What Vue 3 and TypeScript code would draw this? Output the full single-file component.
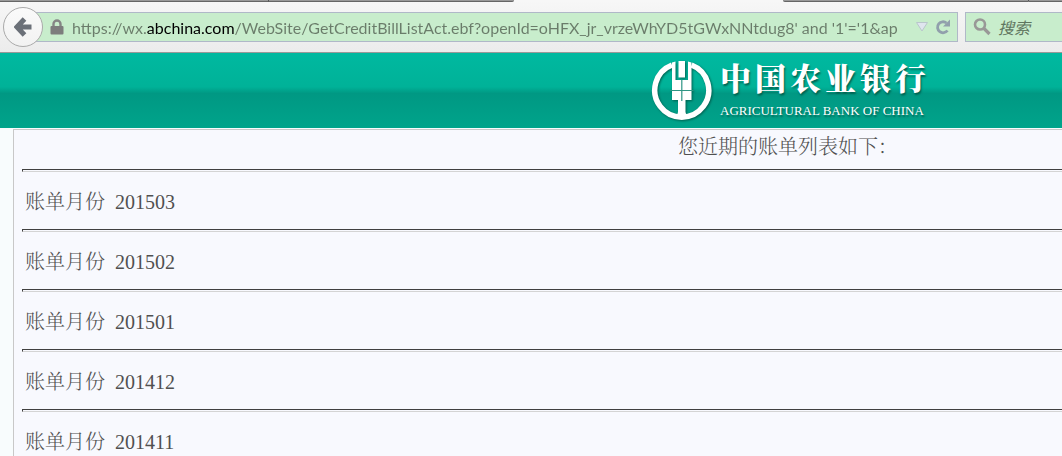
<script setup lang="ts">
import { ref } from 'vue'

const address = ref("https://wx.abchina.com/WebSite/GetCreditBillListAct.ebf?openId=oHFX_jr_vrzeWhYD5tGWxNNtdug8' and '1'='1&ap")
const query = ref('')
const bankName: string[] = ['中', '国', '农', '业', '银', '行']
const months: string[] = ['201503', '201502', '201501', '201412', '201411']
</script>

<template>
  <div class="window">
    <header class="toolbar">
      <div class="tabs">
        <span class="tab first"></span>
        <span class="tab second"></span>
        <span class="tab active"></span>
        <span class="tab third"></span>
        <span class="tab last"></span>
      </div>
      <div class="bar">
        <button class="back" type="button" aria-label="后退">
          <svg width="18" height="20" viewBox="0 0 18 20">
            <path d="M10.500 2 L3 10 L10.500 18 M3 10 H17.500" fill="none" stroke="#6b7078" stroke-width="5" />
          </svg>
        </button>
        <div class="field location">
          <svg class="lock" width="14" height="16" viewBox="0 0 14 16">
            <path d="M3.500 8 V5 a3.500 3.500 0 0 1 7 0 V8" fill="none" stroke="#858585" stroke-width="2.400" />
            <rect x="0.500" y="7" width="13" height="8.500" rx="1" fill="#7d7d7d" />
          </svg>
          <input v-model="address" class="address" type="text" aria-label="地址" spellcheck="false" />
          <button class="icon drop" type="button" aria-label="历史记录">
            <svg width="14" height="12" viewBox="0 0 14 12">
              <path d="M1.500 1.500 H12.500 L7 10 Z" fill="#dfe5ee" stroke="#b9c6cc" />
            </svg>
          </button>
          <button class="icon" type="button" aria-label="刷新">
            <svg width="16" height="16" viewBox="0 0 16 16">
              <path d="M12.500 11.500 A5.500 5.500 0 1 1 11.500 4" fill="none" stroke="#919fac" stroke-width="2.800" />
              <path d="M15 0.500 V7.500 H8 Z" fill="#919fac" />
            </svg>
          </button>
        </div>
        <div class="field search">
          <svg width="18" height="18" viewBox="0 0 18 18">
            <circle cx="7" cy="6.500" r="5" fill="none" stroke="#999897" stroke-width="2.600" />
            <path d="M10.500 10 L16.500 16" stroke="#999897" stroke-width="3.200" />
          </svg>
          <input v-model="query" class="query" type="text" placeholder="搜索" aria-label="搜索" />
        </div>
      </div>
    </header>

    <main class="page">
      <div class="banner">
        <svg class="emblem" width="62" height="62" viewBox="0 0 62 62">
          <path d="M22 5 A27 27 0 1 0 41.500 5" fill="none" stroke="#fff" stroke-width="5.500" />
          <path d="M22 2.500 L25.500 1.500 V20 H38 V1.500 L41.500 2.500 V40 H35.500 V52 Q35.500 55 38.500 57 H25 Q28 55 28 52 V40 H22 Z" fill="#fff" />
          <path d="M28.500 1 H35 V17.500 H28.500 Z" fill="#fff" />
          <path d="M31.800 19.500 V41 M20 30.500 H43.500" stroke="#2f9584" stroke-width="1.200" />
        </svg>
        <div class="brand">
          <div class="cn"><span v-for="c in bankName" :key="c">{{ c }}</span></div>
          <div class="en">AGRICULTURAL BANK OF CHINA</div>
        </div>
      </div>
      <section class="panel">
        <h1>您近期的账单列表如下：</h1>
        <div v-for="m in months" :key="m" class="item">
          <hr />
          <p class="bill"><span>账单月份</span><span>{{ m }}</span></p>
        </div>
      </section>
    </main>
  </div>
</template>

<style>
body {
  margin: 0;
  background: #f8fcfd;
}
</style>

<style scoped>
.window {
  height: 100vh;
  overflow: hidden;
  font-family: "Liberation Serif", "Noto Serif CJK SC", "Noto Sans CJK SC", serif;
}
.toolbar {
  box-sizing: border-box;
  height: 53px;
  border-bottom: 1px solid #999;
  background: linear-gradient(#f7f7f7, #ececec);
}
.tabs {
  display: flex;
  height: 2px;
}
.tab {
  box-sizing: border-box;
  background: #999;
  border-bottom: 1px solid #666;
}
.first {
  width: 269px;
  border-right: 1px solid #555;
}
.second {
  width: 245px;
  border-bottom-right-radius: 4px;
}
.active {
  width: 269px;
  background: #f7f7f7;
  border: 0;
}
.third {
  width: 246px;
  border-right: 1px solid #555;
  border-bottom-left-radius: 4px;
}
.last {
  flex: 1;
}
.bar {
  display: flex;
  align-items: center;
  height: 50px;
  padding-left: 3px;
}
.back {
  z-index: 1;
  display: flex;
  align-items: center;
  justify-content: center;
  flex: none;
  width: 40px;
  height: 40px;
  padding: 0;
  border: 1px solid #aaa;
  border-radius: 50%;
  background: linear-gradient(#fafafa, #f2f2f2);
}
.field {
  box-sizing: border-box;
  display: flex;
  align-items: center;
  height: 30px;
  border: 1px solid #b0b8c8;
  background: #c8edcc;
}
.location {
  flex: 1;
  min-width: 0;
  margin-left: -8px;
  padding-left: 14px;
  padding-right: 6px;
}
.lock {
  flex: none;
}
.address,
.query {
  min-width: 0;
  height: 26px;
  padding: 0;
  border: 0;
  outline: 0;
  background: transparent;
}
.address {
  flex: 1;
  margin: 0 10px 0 8px;
  font: 16px Lato, "Noto Sans", sans-serif;
  color: transparent;
  background: linear-gradient(90deg, #6a7c6a 75px, #000 75px, #000 163px, #6a7c6a 163px);
  -webkit-background-clip: text;
  background-clip: text;
}
.icon {
  display: flex;
  padding: 0;
  border: 0;
  background: transparent;
}
.drop {
  margin-right: 6px;
}
.search {
  width: 120px;
  margin-left: 7px;
  margin-right: -23px;
  padding-left: 7px;
  gap: 7px;
}
.search svg {
  flex: none;
}
.query {
  width: 60px;
  font: italic 16px "Noto Sans CJK SC", sans-serif;
  color: #000;
}
.query::placeholder {
  color: #5f755f;
}
.page {
  min-width: 1576px;
}
.banner {
  display: flex;
  align-items: center;
  justify-content: center;
  gap: 8px;
  height: 75px;
  background: linear-gradient(#00b9a0, #00b298 45%, #009883 54%, #00a48b);
  color: #fff;
}
.emblem {
  filter: drop-shadow(1px 1px 1px #00604f);
}
.brand {
  width: 206px;
  text-shadow: 1px 2px 2px #00604f;
}
.cn {
  display: flex;
  justify-content: space-between;
  font-family: "Noto Serif CJK SC", "Noto Sans CJK SC", serif;
  font-size: 31px;
  font-weight: 900;
  line-height: 32px;
}
.en {
  padding-top: 8px;
  font-size: 13px;
  line-height: 20px;
  white-space: nowrap;
}
.panel {
  margin: 1px 13px 0;
  padding: 0 8px;
  border: 1px solid #c8c8c8;
  background: #f8f9fe;
  color: #505050;
}
h1 {
  margin: 0;
  padding: 2px 0 7px;
  font-size: 20px;
  font-weight: 300;
  line-height: 30px;
  text-align: center;
}
hr {
  height: 1px;
  margin: 0;
  border: 1px solid;
  border-color: #404040 #d4d4d4 #d4d4d4 #404040;
}
.bill {
  display: flex;
  gap: 10px;
  margin: 0;
  padding: 3px 0 0 3px;
  font-size: 20px;
  font-weight: 300;
  line-height: 54px;
}
</style>
